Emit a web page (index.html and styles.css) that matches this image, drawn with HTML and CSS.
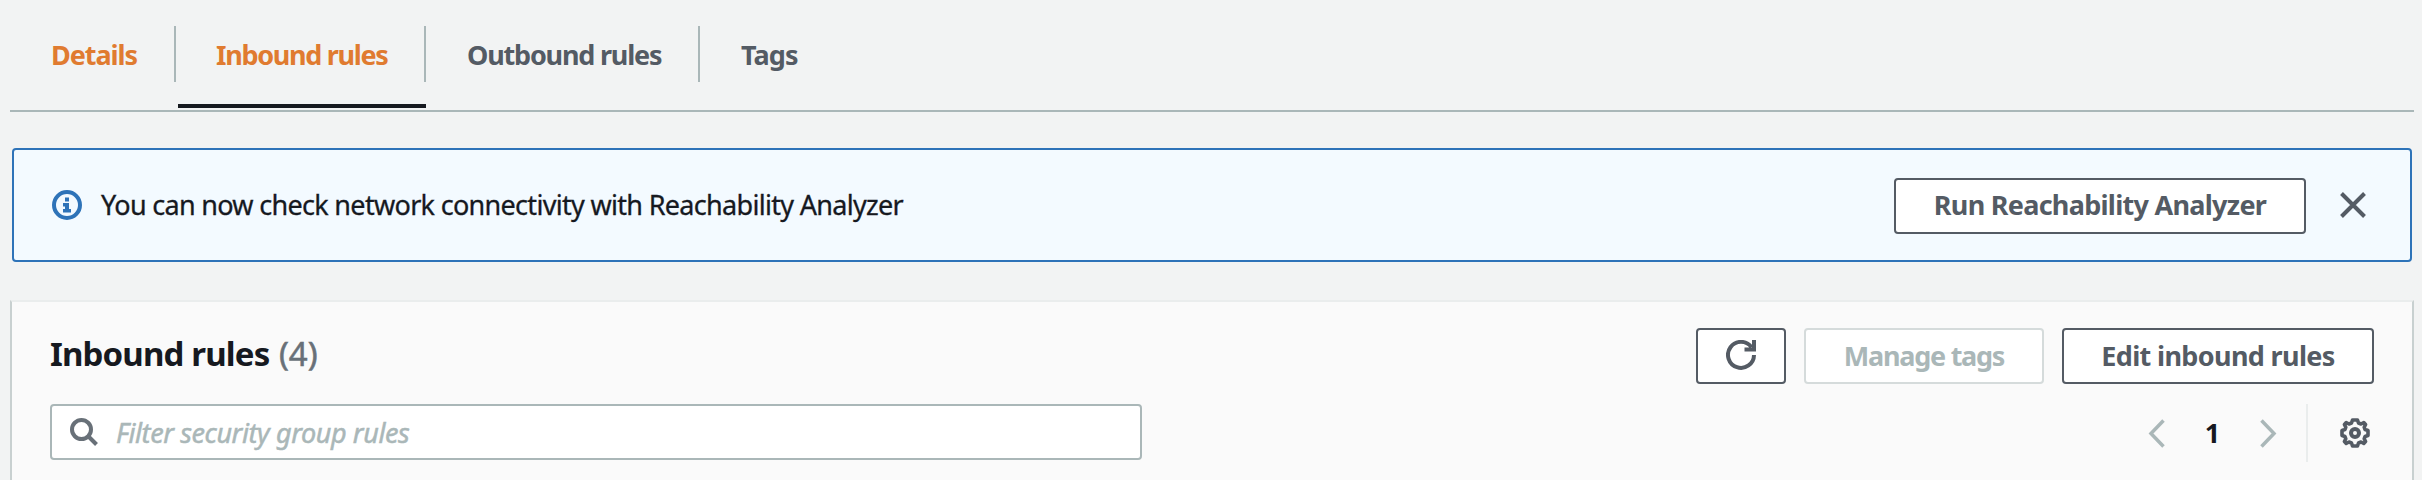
FILE: index.html
```html
<!DOCTYPE html>
<html lang="en">
<head>
<meta charset="utf-8">
<title>Inbound rules</title>
<link rel="stylesheet" href="styles.css">
</head>
<body>
<nav class="tabs">
  <a class="tab tab-details"><span>Details</span></a>
  <a class="tab tab-inbound active"><span>Inbound rules</span></a>
  <a class="tab tab-outbound"><span>Outbound rules</span></a>
  <a class="tab tab-tags"><span>Tags</span></a>
</nav>
<section class="alert">
  <svg class="icon" width="30" height="30" viewBox="0 0 30 30"><circle cx="15" cy="15" r="13" fill="none" stroke="currentColor" stroke-width="4"/><path fill="currentColor" d="M13 7.500h4v4h-4zM11 13h6v6h2v3.500h-8V19h2v-2.500h-2z"/></svg>
  <p class="message">You can now check network connectivity with Reachability Analyzer</p>
  <button class="btn btn-run"><span>Run Reachability Analyzer</span></button>
  <svg class="close" width="28" height="28" viewBox="0 0 28 28"><path d="M2.500 2.500l23 23M25.500 2.500l-23 23" fill="none" stroke="currentColor" stroke-width="4"/></svg>
</section>
<section class="panel">
  <header class="panel-head">
    <h2><span class="title">Inbound rules</span> <span class="count">(4)</span></h2>
    <div class="actions">
      <button class="btn btn-refresh" aria-label="Refresh"><svg width="30" height="30" viewBox="0 0 30 30" fill="none" stroke="currentColor" stroke-width="4"><path d="M28 15A13 13 0 1 1 25.500 7.200M28 0v9.500h-9.500"/></svg></button>
      <button class="btn btn-manage" disabled><span>Manage tags</span></button>
      <button class="btn btn-edit"><span>Edit inbound rules</span></button>
    </div>
  </header>
  <div class="toolbar">
    <div class="search">
      <svg width="28" height="28" viewBox="0 0 28 28" fill="none" stroke="currentColor" stroke-width="4"><circle cx="11.500" cy="11.500" r="9.500"/><path d="M18 18l8.500 8.500"/></svg>
      <span class="placeholder">Filter security group rules</span>
    </div>
    <div class="pager">
      <svg class="arrow" width="17" height="29" viewBox="0 0 17 29"><path d="M15.500 1.500L3 14.500l12.500 13" fill="none" stroke="currentColor" stroke-width="3.500"/></svg>
      <span class="page">1</span>
      <svg class="arrow" width="17" height="29" viewBox="0 0 17 29"><path d="M1.500 1.500L14 14.500l-12.500 13" fill="none" stroke="currentColor" stroke-width="3.500"/></svg>
      <span class="rule"></span>
      <svg class="gear" width="30" height="30" viewBox="0 0 30 30" fill="none" stroke="currentColor" stroke-width="4"><circle cx="15" cy="15" r="4"/><path stroke-width="3.600" stroke-linejoin="round" d="M12.500 2h5l1 3 2.500 1 2.800-1.400 1.800 1.800L24.200 9.200l.8 2.300 3 1v5l-3 1-.8 2.300 1.400 2.800-1.800 1.800L21 24l-2.500 1-1 3h-5l-1-3L9 24l-2.800 1.400-1.800-1.800 1.400-2.800-.8-2.300-3-1v-5l3-1 .8-2.300-1.400-2.800 1.800-1.800L9 6l2.500-1z"/></svg>
    </div>
  </div>
</section>
</body>
</html>
```
FILE: styles.css
```css
* { box-sizing: border-box; }
body {
  margin: 0;
  height: 480px;
  overflow: hidden;
  background: #f2f3f3;
  color: #16191f;
  font: 27px/36px "Noto Sans", "Open Sans", sans-serif;
}
svg { display: block; flex: none; }
span, p { white-space: nowrap; }
.tabs {
  display: flex;
  height: 112px;
  margin: 0 8px 0 10px;
  border-bottom: 2px solid #aab7b8;
}
.tab {
  display: flex;
  height: 108px;
  padding: 26px 0;
  color: #545b64;
  font-weight: 700;
}
.tab span {
  flex: 1;
  padding: 11px 0 9px 41px;
  border-right: 2px solid #aab7b8;
}
.tab-details { width: 166px; margin-right: 2px; color: #e07b30; letter-spacing: -1.05px; }
.tab-inbound { width: 248px; color: #e07b30; letter-spacing: -1.3px; }
.tab-inbound span { padding-left: 38px; }
.tab-outbound { width: 274px; letter-spacing: -1.2px; }
.tab-tags { letter-spacing: -0.9px; }
.tab-tags span { border-right: 0; }
.active { border-bottom: 4px solid #16191f; padding-bottom: 22px; }
.alert {
  display: flex;
  align-items: center;
  height: 114px;
  margin: 36px 10px 0 12px;
  padding: 0 43px 0 38px;
  border: 2px solid #2e73b8;
  border-radius: 4px;
  background: #f3faff;
}
.icon { color: #2e73b8; }
.message {
  flex: 1;
  margin: 0 0 0 19px;
  letter-spacing: -0.69px;
  -webkit-text-stroke: 0.3px currentColor;
}
.btn {
  display: flex;
  align-items: center;
  justify-content: center;
  height: 56px;
  padding: 0;
  border: 2px solid #545b64;
  border-radius: 4px;
  background: #fff;
  color: #545b64;
  font: inherit;
  font-weight: 700;
}
.btn-run { width: 412px; margin: 2px 33px 0 0; padding-bottom: 2px; letter-spacing: -0.72px; }
.close { color: #545b64; }
.panel {
  height: 200px;
  margin: 38px 8px 0 10px;
  padding: 26px 38px 0;
  border: 2px solid #c8d0d0;
  border-top-color: #eaeded;
  border-bottom: 0;
  background: #fafafa;
}
.panel-head { display: flex; justify-content: space-between; height: 76px; }
h2 { margin: 8px 0 0; font-size: 33px; line-height: 36px; }
.title { letter-spacing: -0.85px; }
.count { margin-left: 1px; color: #687078; font-weight: 400; -webkit-text-stroke: 0.5px currentColor; }
.actions { display: flex; gap: 18px; }
.btn-refresh { width: 90px; padding-bottom: 2px; }
.btn-manage { width: 240px; border-color: #d5dbdb; color: #aab7b8; letter-spacing: -1.25px; }
.btn-edit { width: 312px; letter-spacing: -0.65px; }
.toolbar { display: flex; justify-content: space-between; }
.search {
  display: flex;
  align-items: center;
  width: 1092px;
  height: 56px;
  padding-left: 18px;
  border: 2px solid #aab7b8;
  border-radius: 4px;
  background: #fff;
  color: #687078;
}
.placeholder {
  margin: 2px 0 0 18px;
  color: #aab7b8;
  font-style: italic;
  letter-spacing: -0.4px;
  -webkit-text-stroke: 0.5px currentColor;
}
.pager { display: flex; align-items: center; height: 58px; padding-right: 4px; }
.arrow { color: #aab7b8; }
.page { width: 95px; text-align: center; font-weight: 700; }
.rule { width: 2px; height: 58px; margin: 0 32px 0 29px; background: #eaeded; }
.gear { color: #545b64; }
```
